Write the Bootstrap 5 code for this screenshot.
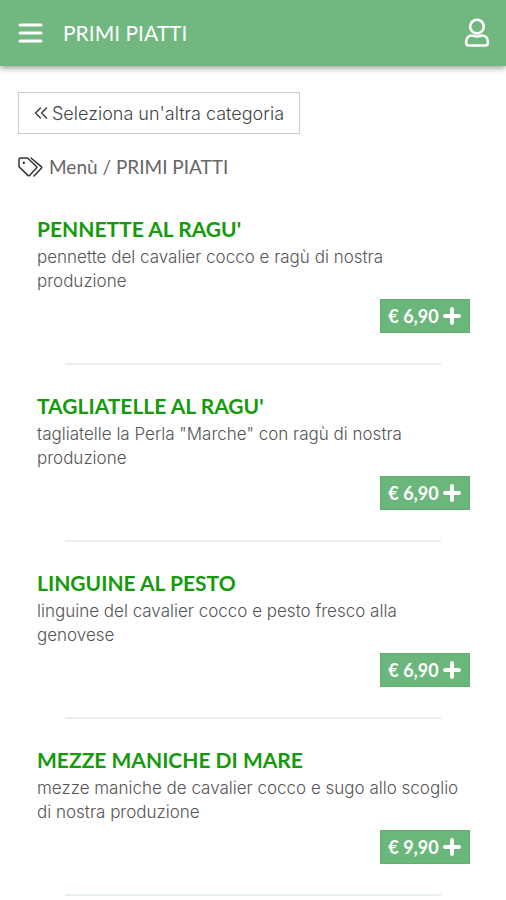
<!DOCTYPE html>
<html lang="it">
<head>
<meta charset="utf-8">
<meta name="viewport" content="width=device-width, initial-scale=1">
<title>Primi piatti</title>
<link href="https://cdn.jsdelivr.net/npm/bootstrap@5.3.0/dist/css/bootstrap.min.css" rel="stylesheet">
<style>
body{font-family:Lato,"Open Sans",sans-serif;color:#555;background:#fff}
.top-bar{background:#71b780;height:66px;padding:0 16px 0 18px;box-shadow:0 2px 6px rgba(0,0,0,.4)}
.page-title{font-size:21px;line-height:28px;font-weight:400}
.menu-page{padding:26px 18px 0}
.back-link{border:1px solid #ccc;border-radius:0;height:42px;padding:0 15px;font-family:Inter,sans-serif;font-weight:300;font-size:18px;color:#444;gap:4px}
.crumbs{font-size:19px;line-height:26px;margin:20px 0 35px;gap:6px;color:#666}
.crumbs a{color:inherit}
.dish-body{padding:0 18px 0 19px}
.dish-name{font-size:21px;line-height:28px;font-weight:700;color:#159a0b;margin:0 0 2px}
.dish-text{font-family:Inter,sans-serif;font-weight:300;font-size:17px;line-height:24px;color:#555;margin:0 0 6px}
.price-btn{background:#6bb77b;border:1px solid #62ae72;border-radius:0;color:#fff;font-size:18px;font-weight:700;height:34px;width:90px;padding:0;gap:3px}
.dish-rule{width:80%;height:2px;background:#e6efeb;border:0;opacity:1;margin:30px auto 27px}
</style>
<script src="https://cdn.jsdelivr.net/npm/bootstrap@5.3.0/dist/js/bootstrap.bundle.min.js"></script>
</head>
<body>
<header class="top-bar d-flex align-items-center text-white">
  <button type="button" class="btn p-0 border-0 text-white d-flex" aria-label="Apri il menu">
    <svg width="25" height="22" viewBox="0 0 25 22" fill="none" stroke="currentColor" stroke-width="3" stroke-linecap="round"><path d="M2 3h21M2 11h21M2 19h21"/></svg>
  </button>
  <h1 class="page-title mb-0 ms-3 ps-1">PRIMI PIATTI</h1>
  <a href="#" class="ms-auto text-white d-flex" aria-label="Profilo">
    <svg width="26" height="30" viewBox="0 0 26 30" fill="none" stroke="currentColor" stroke-width="2.6"><circle cx="13" cy="8.600" r="6.800"/><path d="M8 17.500C4.500 17.500 2.300 20 2.300 23V25.200Q2.300 27.500 4.600 27.500H21.400Q23.700 27.500 23.700 25.200V23C23.700 20 21.500 17.500 18 17.500C16 17.500 15 18.500 13 18.500S10 17.500 8 17.500Z"/></svg>
  </a>
</header>
<main class="menu-page">
  <a href="#" class="btn back-link d-inline-flex align-items-center">
    <svg width="14" height="14" viewBox="0 0 14 14" fill="none" stroke="currentColor" stroke-width="1.600" stroke-linecap="round" stroke-linejoin="round"><path d="M6.500 2l-5 5 5 5M12.500 2l-5 5 5 5"/></svg>
    <span>Seleziona un'altra categoria</span>
  </a>
  <nav class="crumbs d-flex align-items-center" aria-label="Percorso">
    <svg width="25" height="20" viewBox="0 0 25 20" fill="none" stroke="#333" stroke-width="1.500" stroke-linejoin="round" stroke-linecap="round"><path d="M1 2.500Q1 1 2.500 1H9.500L18.500 9.500Q19.200 10.300 18.500 11L11.500 18.400Q10.700 19.200 9.900 18.400L1 9.800ZM13 1L23.300 9.600Q24.200 10.400 23.400 11.200L16 19"/><circle cx="5.800" cy="5.700" r="1.200" fill="#333" stroke="none"/></svg>
    <span><a href="#" class="text-decoration-none">Menù</a> / PRIMI PIATTI</span>
  </nav>

  <article>
    <div class="dish-body">
      <h2 class="dish-name">PENNETTE AL RAGU'</h2>
      <p class="dish-text">pennette del cavalier cocco e ragù di nostra produzione</p>
      <button type="button" class="btn price-btn d-flex align-items-center justify-content-center ms-auto"><span>€ 6,90</span><svg width="20" height="20" viewBox="0 0 20 20" stroke="currentColor" stroke-width="4" stroke-linecap="round" aria-hidden="true"><path d="M10 3v14M3 10h14"/></svg></button>
    </div>
    <hr class="dish-rule">
  </article>
  <article>
    <div class="dish-body">
      <h2 class="dish-name">TAGLIATELLE AL RAGU'</h2>
      <p class="dish-text">tagliatelle la Perla "Marche" con ragù di nostra produzione</p>
      <button type="button" class="btn price-btn d-flex align-items-center justify-content-center ms-auto"><span>€ 6,90</span><svg width="20" height="20" viewBox="0 0 20 20" stroke="currentColor" stroke-width="4" stroke-linecap="round" aria-hidden="true"><path d="M10 3v14M3 10h14"/></svg></button>
    </div>
    <hr class="dish-rule">
  </article>
  <article>
    <div class="dish-body">
      <h2 class="dish-name">LINGUINE AL PESTO</h2>
      <p class="dish-text">linguine del cavalier cocco e pesto fresco alla genovese</p>
      <button type="button" class="btn price-btn d-flex align-items-center justify-content-center ms-auto"><span>€ 6,90</span><svg width="20" height="20" viewBox="0 0 20 20" stroke="currentColor" stroke-width="4" stroke-linecap="round" aria-hidden="true"><path d="M10 3v14M3 10h14"/></svg></button>
    </div>
    <hr class="dish-rule">
  </article>
  <article>
    <div class="dish-body">
      <h2 class="dish-name">MEZZE MANICHE DI MARE</h2>
      <p class="dish-text">mezze maniche de cavalier cocco e sugo allo scoglio di nostra produzione</p>
      <button type="button" class="btn price-btn d-flex align-items-center justify-content-center ms-auto"><span>€ 9,90</span><svg width="20" height="20" viewBox="0 0 20 20" stroke="currentColor" stroke-width="4" stroke-linecap="round" aria-hidden="true"><path d="M10 3v14M3 10h14"/></svg></button>
    </div>
    <hr class="dish-rule mb-0">
  </article>
</main>
</body>
</html>
